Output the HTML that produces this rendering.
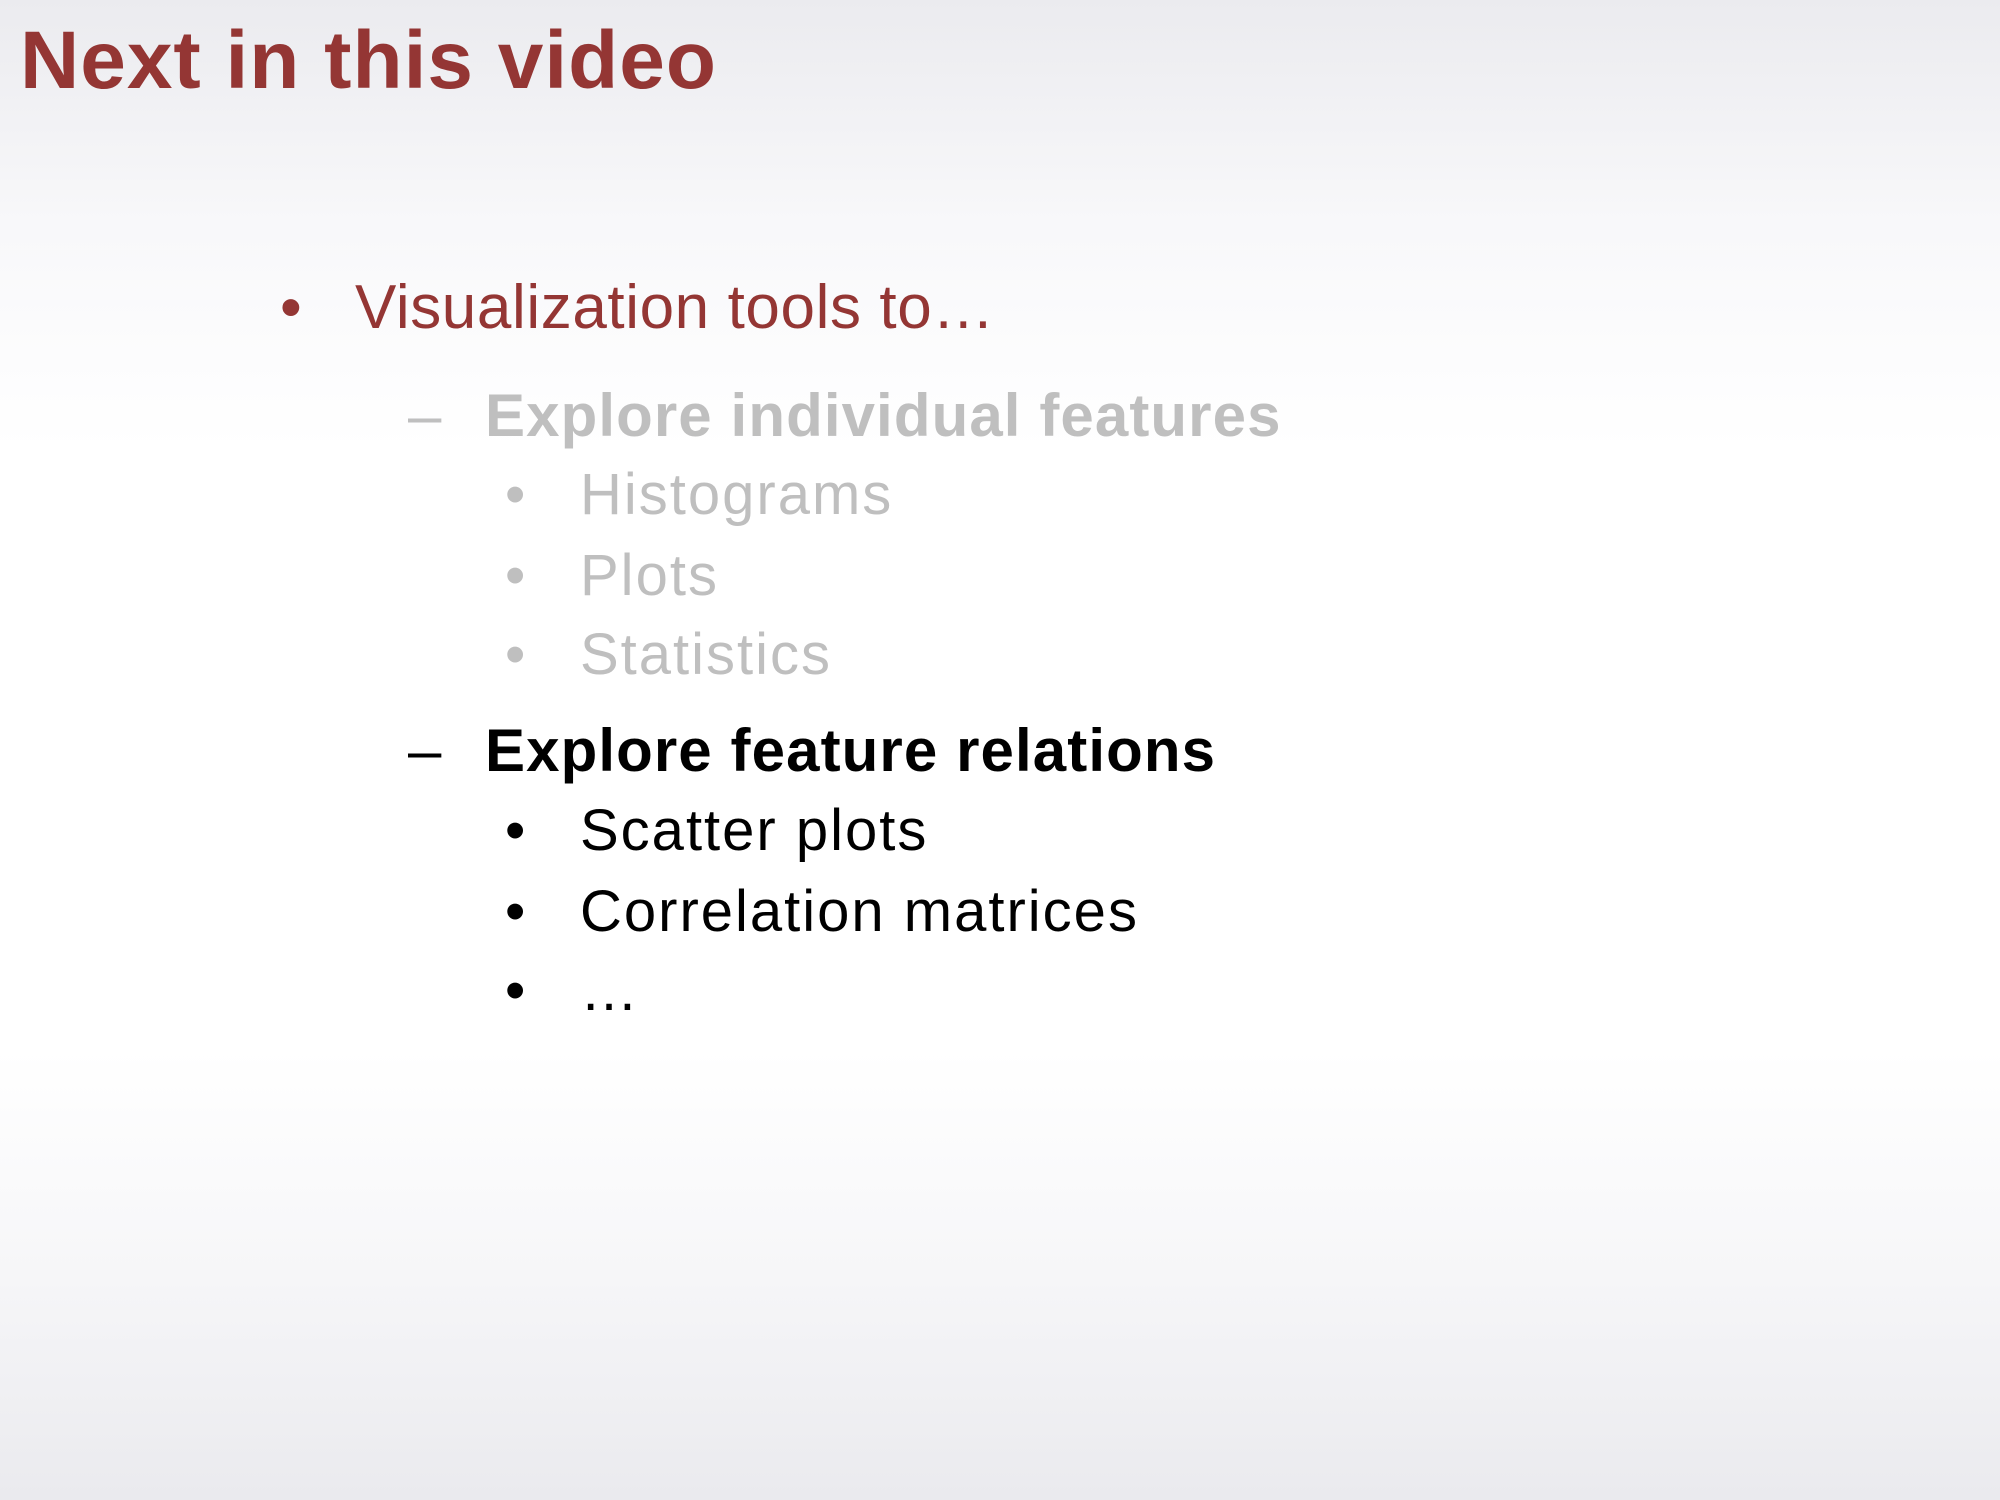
<!DOCTYPE html>
<html><head><meta charset="utf-8"><style>
html,body{margin:0;padding:0}
body{width:2000px;height:1500px;position:relative;overflow:hidden;font-family:"Liberation Sans",sans-serif;
background:linear-gradient(to bottom,#ebebef 0%,#f8f8fa 15%,#ffffff 30%,#ffffff 70%,#f6f6f8 85%,#eaeaee 100%);}
.t{position:absolute;line-height:1;white-space:nowrap}
.title{left:20px;font-size:82px;font-weight:bold;color:#943634;letter-spacing:1px}
.l1{font-size:62px;color:#943634;letter-spacing:0.6px}
.h{font-size:60px;font-weight:bold;letter-spacing:1.1px}
.d{font-size:60px;font-weight:normal}
.s{font-size:58px;letter-spacing:2px}
.g{color:#bfbfbf}.k{color:#000}
</style></head><body>
<div class="t title" style="top:20px">Next in this video</div>

<div class="t l1" style="left:280px;top:277px">•</div>
<div class="t l1" style="left:355px;top:277px">Visualization tools to…</div>

<div class="t d g" style="left:408px;top:386px">–</div>
<div class="t h g" style="left:485px;top:386px">Explore individual features</div>
<div class="t s g" style="left:505px;top:466px">•</div>
<div class="t s g" style="left:580px;top:466px">Histograms</div>
<div class="t s g" style="left:505px;top:547px">•</div>
<div class="t s g" style="left:580px;top:547px">Plots</div>
<div class="t s g" style="left:505px;top:626px">•</div>
<div class="t s g" style="left:580px;top:626px">Statistics</div>

<div class="t d k" style="left:408px;top:721px">–</div>
<div class="t h k" style="left:485px;top:721px">Explore feature relations</div>
<div class="t s k" style="left:505px;top:802px">•</div>
<div class="t s k" style="left:580px;top:802px">Scatter plots</div>
<div class="t s k" style="left:505px;top:883px">•</div>
<div class="t s k" style="left:580px;top:883px">Correlation matrices</div>
<div class="t s k" style="left:505px;top:962px">•</div>
<div class="t s k" style="left:580px;top:962px">…</div>
</body></html>
